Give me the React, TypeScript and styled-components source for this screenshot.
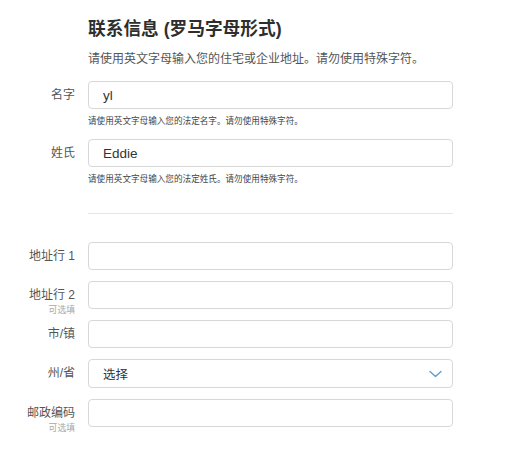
import React from "react";
import styled, { createGlobalStyle } from "styled-components";

const GlobalStyle = createGlobalStyle`
  html, body {
    margin: 0;
    padding: 0;
    background: #ffffff;
  }
  body {
    font-family: "Liberation Sans", "Noto Sans CJK SC", sans-serif;
    color: #333;
  }
  * { box-sizing: border-box; }
`;

const Page = styled.div`
  width: 510px;
  height: 454px;
  padding-top: 17px;
  display: flex;
  flex-direction: column;
`;

const Header = styled.div`
  padding-left: 88px;
  display: flex;
  flex-direction: column;
`;

const Title = styled.h1`
  margin: 0;
  font-size: 17.7px;
  line-height: 24px;
  font-weight: 700;
  color: #2e2e2e;
`;

const Intro = styled.p`
  margin: 9px 0 0;
  font-size: 12px;
  line-height: 18px;
  color: #555;
`;

const Fields = styled.div<{ $top: number }>`
  margin-top: ${(p) => p.$top}px;
  display: flex;
  flex-direction: column;
  gap: 11px;
`;

const Row = styled.div`
  display: grid;
  grid-template-columns: 75px 365px;
  column-gap: 13px;
  align-items: start;
`;

const LabelCell = styled.div`
  height: 28px;
  display: flex;
  flex-direction: column;
  align-items: flex-end;
  overflow: visible;
`;

const LabelText = styled.label`
  font-size: 12px;
  line-height: 28px;
  color: #555;
  white-space: nowrap;
`;

const Optional = styled.span`
  margin-top: -3px;
  font-size: 8.8px;
  line-height: 9px;
  color: #a8a8a8;
  white-space: nowrap;
`;

const Control = styled.div`
  display: flex;
  flex-direction: column;
`;

const Input = styled.input`
  width: 365px;
  height: 28px;
  margin: 0;
  padding: 0 14px;
  border: 1px solid #d8d8d8;
  border-radius: 4px;
  background: #fff;
  font-family: "Liberation Sans", "Noto Sans CJK SC", sans-serif;
  font-size: 13.5px;
  color: #333;
  outline: none;
`;

const SelectBox = styled.div`
  position: relative;
  width: 365px;
  height: 29px;
  padding: 0 14px;
  border: 1px solid #d8d8d8;
  border-radius: 4px;
  background: #fff;
  display: flex;
  align-items: center;
  justify-content: space-between;
`;

const SelectValue = styled.span`
  font-size: 12.5px;
  color: #333;
`;

const Chevron = styled.svg`
  margin-right: -4px;
  display: block;
`;

const Hint = styled.div`
  margin-top: 6px;
  font-size: 8.6px;
  line-height: 12px;
  color: #444;
  white-space: nowrap;
`;

const NameFields = styled.div`
  margin-top: 13px;
  display: flex;
  flex-direction: column;
  gap: 12px;
`;

const DividerRow = styled.div`
  margin-top: 28px;
  padding-left: 88px;
`;

const Divider = styled.hr`
  margin: 0;
  width: 365px;
  border: none;
  border-top: 1px solid #e4e4e4;
`;

type FieldProps = {
  label: string;
  optional?: boolean;
  children: React.ReactNode;
};

const Field = ({ label, optional, children }: FieldProps) => (
  <Row>
    <LabelCell>
      <LabelText>{label}</LabelText>
      {optional && <Optional>可选填</Optional>}
    </LabelCell>
    <Control>{children}</Control>
  </Row>
);

export default function App() {
  return (
    <Page>
      <GlobalStyle />
      <Header>
        <Title>联系信息 (罗马字母形式)</Title>
        <Intro>请使用英文字母输入您的住宅或企业地址。请勿使用特殊字符。</Intro>
      </Header>
      <NameFields>
        <Field label="名字">
          <Input defaultValue="yl" />
          <Hint>请使用英文字母输入您的法定名字。请勿使用特殊字符。</Hint>
        </Field>
        <Field label="姓氏">
          <Input defaultValue="Eddie" />
          <Hint>请使用英文字母输入您的法定姓氏。请勿使用特殊字符。</Hint>
        </Field>
      </NameFields>
      <DividerRow>
        <Divider />
      </DividerRow>
      <Fields $top={28}>
        <Field label="地址行 1">
          <Input />
        </Field>
        <Field label="地址行 2" optional>
          <Input />
        </Field>
        <Field label="市/镇">
          <Input />
        </Field>
        <Field label="州/省">
          <SelectBox>
            <SelectValue>选择</SelectValue>
            <Chevron width="13" height="8" viewBox="0 0 13 8">
              <polyline
                points="1,1.5 6.5,6.5 12,1.5"
                fill="none"
                stroke="#5b9fd6"
                strokeWidth="1.4"
                strokeLinecap="round"
                strokeLinejoin="round"
              />
            </Chevron>
          </SelectBox>
        </Field>
        <Field label="邮政编码" optional>
          <Input />
        </Field>
      </Fields>
    </Page>
  );
}
